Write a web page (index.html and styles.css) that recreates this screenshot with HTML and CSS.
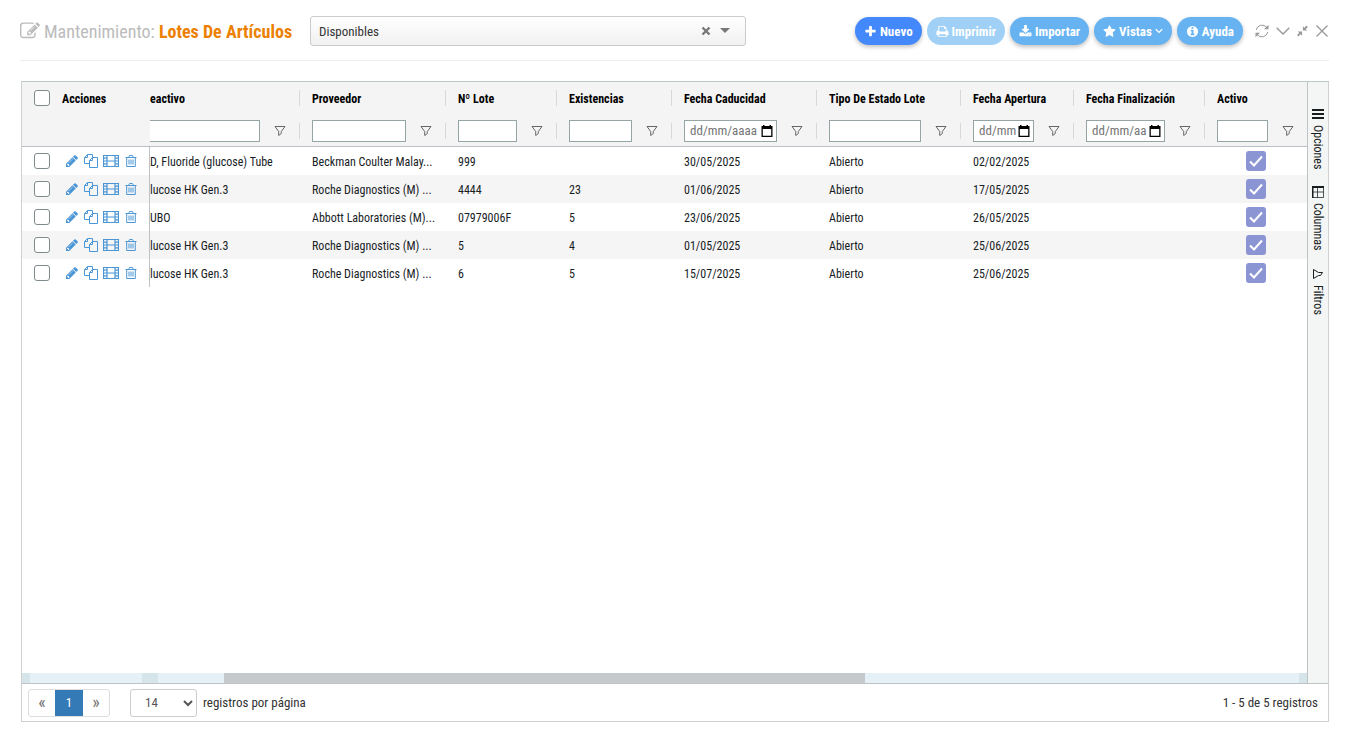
FILE: index.html
```html
<!DOCTYPE html>
<html lang="es">

<head>
  <meta charset="UTF-8" />
  <meta name="viewport" content="width=device-width, initial-scale=1.0" />
  <title>Mantenimiento: Lotes De Artículos</title>
  <link rel="stylesheet" href="styles.css">
</head>

<body>
  <!-- Iconos compartidos -->
  <svg class="sprite" aria-hidden="true">
    <symbol id="i-edit" viewBox="0 0 1792 1792"><path d="M888 1184l116-116-152-152-116 116v56h96v96h56zm440-720q-16-16-33 1l-350 350q-17 17-1 33t33-1l350-350q17-17 1-33zm80 594v190q0 119-84.5 203.5t-203.5 84.5h-832q-119 0-203.5-84.5t-84.5-203.5v-832q0-119 84.5-203.5t203.5-84.5h832q63 0 117 25 15 7 18 23 3 17-9 29l-49 49q-14 14-32 8-23-6-45-6h-832q-66 0-113 47t-47 113v832q0 66 47 113t113 47h832q66 0 113-47t47-113v-126q0-13 9-22l64-64q15-15 35-7t20 29zm-96-738l288 288-672 672h-288v-288zm444 132l-92 92-288-288 92-92q28-28 68-28t68 28l152 152q28 28 28 68t-28 68z"/></symbol>
    <symbol id="i-plus" viewBox="0 0 1792 1792"><path d="M1600 736v192q0 40-28 68t-68 28h-416v416q0 40-28 68t-68 28h-192q-40 0-68-28t-28-68v-416h-416q-40 0-68-28t-28-68v-192q0-40 28-68t68-28h416v-416q0-40 28-68t68-28h192q40 0 68 28t28 68v416h416q40 0 68 28t28 68z"/></symbol>
    <symbol id="i-print" viewBox="0 0 1792 1792"><path d="M448 1536h896v-256h-896v256zm0-640h896v-384h-160q-40 0-68-28t-28-68v-160h-640v640zm1152 64q0-26-19-45t-45-19-45 19-19 45 19 45 45 19 45-19 19-45zm128 0v416q0 13-9.500 22.500t-22.500 9.500h-224v160q0 40-28 68t-68 28h-960q-40 0-68-28t-28-68v-160h-224q-13 0-22.500-9.500t-9.500-22.500v-416q0-79 56.500-135.500t135.500-56.500h64v-544q0-40 28-68t68-28h672q40 0 88 20t76 48l152 152q28 28 48 76t20 88v256h64q79 0 135.500 56.500t56.500 135.500z"/></symbol>
    <symbol id="i-download" viewBox="0 0 1792 1792"><path d="M1344 1344q0-26-19-45t-45-19-45 19-19 45 19 45 45 19 45-19 19-45zm256 0q0-26-19-45t-45-19-45 19-19 45 19 45 45 19 45-19 19-45zm128-224v320q0 40-28 68t-68 28h-1472q-40 0-68-28t-28-68v-320q0-40 28-68t68-28h465l135 136q58 56 136 56t136-56l136-136h464q40 0 68 28t28 68zm-325-569q17 41-14 70l-448 448q-18 19-45 19t-45-19l-448-448q-31-29-14-70 17-39 59-39h256v-448q0-26 19-45t45-19h256q26 0 45 19t19 45v448h256q42 0 59 39z"/></symbol>
    <symbol id="i-star" viewBox="0 0 1792 1792"><path d="M1728 647q0 22-26 48l-363 354 86 500q1 7 1 20 0 21-10.500 35.500t-30.500 14.500q-19 0-40-12l-449-236-449 236q-22 12-40 12-21 0-31.500-14.500t-10.500-35.500q0-6 2-20l86-500-364-354q-25-27-25-48 0-37 56-46l502-73 225-455q19-41 49-41t49 41l225 455 502 73q56 9 56 46z"/></symbol>
    <symbol id="i-info" viewBox="0 0 1792 1792"><path d="M1152 1376v-160q0-14-9-23t-23-9h-96v-512q0-14-9-23t-23-9h-320q-14 0-23 9t-9 23v160q0 14 9 23t23 9h96v320h-96q-14 0-23 9t-9 23v160q0 14 9 23t23 9h448q14 0 23-9t9-23zm-128-896v-160q0-14-9-23t-23-9h-192q-14 0-23 9t-9 23v160q0 14 9 23t23 9h192q14 0 23-9t9-23zm640 416q0 209-103 385.500t-279.500 279.500-385.500 103-385.500-103-279.500-279.500-103-385.500 103-385.500 279.500-279.500 385.500-103 385.500 103 279.500 279.500 103 385.500z"/></symbol>
    <symbol id="i-pencil" viewBox="0 0 1792 1792"><path d="M491 1536l91-91-235-235-91 91v107h128v128h107zm523-928q0-22-22-22-10 0-17 7l-542 542q-7 7-7 17 0 22 22 22 10 0 17-7l542-542q7-7 7-17zm-54-192l416 416-832 832h-416v-416zm683 96q0 53-37 90l-166 166-416-416 166-165q36-38 90-38 53 0 91 38l235 234q37 39 37 91z"/></symbol>
    <symbol id="i-copy" viewBox="0 0 14 14"><path d="M5.500 9.500h-5v-6l3-3h5v3M3.500.5v3h-3M13.500 13.500h-8v-7l3-3h5zM8.500 3.500v3h-3" fill="none" stroke="currentColor"/></symbol>
    <symbol id="i-film" viewBox="0 0 16 14"><path d="M.5 1.500h15v11H.5zM4 1.500v11M12 1.500v11M4 7h8M.5 4.200H4M.5 7H4M.5 9.800H4M12 4.200h3.500M12 7h3.500M12 9.800h3.500" fill="none" stroke="currentColor" stroke-width="1.200"/></symbol>
    <symbol id="i-trash" viewBox="0 0 12 14"><path d="M.5 3.500h11M3.500 3.500l1-2h3l1 2M1.700 3.500v9h8.600v-9M4 5.500v5M6 5.500v5M8 5.500v5" fill="none" stroke="currentColor"/></symbol>
    <symbol id="i-filter" viewBox="0 0 12 12"><path d="M1 1.500h10L7.300 6.500v2L4.700 10.500v-4z" fill="none" stroke="currentColor"/></symbol>
    <symbol id="i-calendar" viewBox="0 0 12 12"><path d="M2 0h1.500v1h5V0H10v1h1.500v11H.5V1H2zM1.800 4v6.700h8.400V4z" fill-rule="evenodd"/></symbol>
    <symbol id="i-refresh" viewBox="0 0 14 14"><path d="M1.200 6a6 6 0 0 1 10.600-2.600M12.800 8A6 6 0 0 1 2.200 10.600" fill="none" stroke="currentColor"/><path d="M13.500.8v4.400H9zM.5 13.200V8.800H5z"/></symbol>
    <symbol id="i-down" viewBox="0 0 14 14"><path d="M.7 3.700L7 10l6.300-6.300" fill="none" stroke="currentColor" stroke-width="1.400"/></symbol>
    <symbol id="i-compress" viewBox="0 0 14 14"><path d="M7.500 6.500V1l1.900 1.900L12.200.1l1.700 1.700-2.800 2.800L13 6.500zM6.500 7.500V13l-1.900-1.900-2.800 2.800-1.700-1.700 2.800-2.800L1 7.500z"/></symbol>
    <symbol id="i-close" viewBox="0 0 14 14"><path d="M1.500 1.500l11 11M12.500 1.500l-11 11" fill="none" stroke="currentColor" stroke-width="1.300"/></symbol>
  </svg>

  <div class="page">
    <header class="header">
      <h1 class="title">
        <svg class="title-icon"><use href="#i-edit"/></svg>
        <span>Mantenimiento: <strong>Lotes De Artículos</strong></span>
      </h1>

      <div class="view-picker">
        <select class="view-select" aria-label="Vista">
          <option>Disponibles</option>
        </select>
        <button class="view-clear" type="button" aria-label="Quitar vista">
          <svg viewBox="0 0 10 10"><path d="M1.500 1.500l7 7M8.500 1.500l-7 7" stroke="currentColor" stroke-width="2.400"/></svg>
        </button>
        <svg class="view-caret" viewBox="0 0 10 5"><path d="M0 0h10L5 5z"/></svg>
      </div>

      <div class="toolbar">
        <button class="btn btn-primary" type="button"><svg><use href="#i-plus"/></svg>Nuevo</button>
        <button class="btn" type="button" disabled><svg><use href="#i-print"/></svg>Imprimir</button>
        <button class="btn" type="button"><svg><use href="#i-download"/></svg>Importar</button>
        <button class="btn" type="button"><svg><use href="#i-star"/></svg>Vistas<svg class="btn-caret" viewBox="0 0 8 6"><path d="M.8 1.200L4 4.400l3.200-3.200" fill="none" stroke="currentColor" stroke-width="1.300"/></svg></button>
        <button class="btn" type="button"><svg><use href="#i-info"/></svg>Ayuda</button>
      </div>

      <div class="window-tools">
        <button type="button" aria-label="Recargar"><svg><use href="#i-refresh"/></svg></button>
        <button type="button" aria-label="Plegar"><svg><use href="#i-down"/></svg></button>
        <button type="button" aria-label="Reducir"><svg class="small"><use href="#i-compress"/></svg></button>
        <button type="button" aria-label="Cerrar"><svg><use href="#i-close"/></svg></button>
      </div>
    </header>

    <main class="grid">
      <div class="grid-body">
        <div class="grid-view">
          <table class="grid-table">
            <colgroup>
              <col class="c-check"><col class="c-actions"><col class="c-reagent"><col class="c-supplier"><col class="c-lot">
              <col class="c-stock"><col class="c-expiry"><col class="c-state"><col class="c-opened"><col class="c-ended"><col class="c-active">
            </colgroup>
            <thead>
              <tr>
                <th><input type="checkbox" class="check" aria-label="Seleccionar todo"></th>
                <th><div class="head head-plain">Acciones</div></th>
                <th class="edge"><div class="head">eactivo</div></th>
                <th><div class="head">Proveedor</div></th>
                <th><div class="head">Nº Lote</div></th>
                <th><div class="head">Existencias</div></th>
                <th><div class="head">Fecha Caducidad</div></th>
                <th><div class="head">Tipo De Estado Lote</div></th>
                <th><div class="head">Fecha Apertura</div></th>
                <th><div class="head">Fecha Finalización</div></th>
                <th><div class="head">Activo</div></th>
              </tr>
              <tr class="filters">
                <td></td>
                <td></td>
                <td class="edge"><div class="filter"><input type="text" aria-label="Filtrar reactivo"><button type="button" aria-label="Filtro"><svg><use href="#i-filter"/></svg></button></div></td>
                <td><div class="filter"><input type="text" aria-label="Filtrar proveedor"><button type="button" aria-label="Filtro"><svg><use href="#i-filter"/></svg></button></div></td>
                <td><div class="filter"><input type="text" aria-label="Filtrar lote"><button type="button" aria-label="Filtro"><svg><use href="#i-filter"/></svg></button></div></td>
                <td><div class="filter"><input type="text" aria-label="Filtrar existencias"><button type="button" aria-label="Filtro"><svg><use href="#i-filter"/></svg></button></div></td>
                <td><div class="filter"><label class="date"><input type="text" placeholder="dd/mm/aaaa" aria-label="Filtrar caducidad"><svg><use href="#i-calendar"/></svg></label><button type="button" aria-label="Filtro"><svg><use href="#i-filter"/></svg></button></div></td>
                <td><div class="filter"><input type="text" aria-label="Filtrar estado"><button type="button" aria-label="Filtro"><svg><use href="#i-filter"/></svg></button></div></td>
                <td><div class="filter"><label class="date"><input type="text" placeholder="dd/mm/aaaa" aria-label="Filtrar apertura"><svg><use href="#i-calendar"/></svg></label><button type="button" aria-label="Filtro"><svg><use href="#i-filter"/></svg></button></div></td>
                <td><div class="filter"><label class="date"><input type="text" placeholder="dd/mm/aaaa" aria-label="Filtrar finalización"><svg><use href="#i-calendar"/></svg></label><button type="button" aria-label="Filtro"><svg><use href="#i-filter"/></svg></button></div></td>
                <td><div class="filter"><input type="text" aria-label="Filtrar activo"><button type="button" aria-label="Filtro"><svg><use href="#i-filter"/></svg></button></div></td>
              </tr>
            </thead>
            <tbody>
              <tr>
                <td class="pick"><input type="checkbox" class="check" aria-label="Seleccionar lote 999"></td>
                <td class="pinned"><div class="actions"><button type="button" aria-label="Editar"><svg><use href="#i-pencil"/></svg></button><button type="button" aria-label="Copiar"><svg><use href="#i-copy"/></svg></button><button type="button" aria-label="Detalle"><svg class="wide"><use href="#i-film"/></svg></button><button type="button" aria-label="Borrar"><svg><use href="#i-trash"/></svg></button></div></td>
                <td class="edge">D, Fluoride (glucose) Tube</td>
                <td>Beckman Coulter Malay...</td>
                <td>999</td>
                <td></td>
                <td>30/05/2025</td>
                <td>Abierto</td>
                <td>02/02/2025</td>
                <td></td>
                <td class="active"><input type="checkbox" class="flag" checked aria-label="Activo"></td>
              </tr>
              <tr>
                <td class="pick"><input type="checkbox" class="check" aria-label="Seleccionar lote 4444"></td>
                <td class="pinned"><div class="actions"><button type="button" aria-label="Editar"><svg><use href="#i-pencil"/></svg></button><button type="button" aria-label="Copiar"><svg><use href="#i-copy"/></svg></button><button type="button" aria-label="Detalle"><svg class="wide"><use href="#i-film"/></svg></button><button type="button" aria-label="Borrar"><svg><use href="#i-trash"/></svg></button></div></td>
                <td class="edge">lucose HK Gen.3</td>
                <td>Roche Diagnostics (M) ...</td>
                <td>4444</td>
                <td>23</td>
                <td>01/06/2025</td>
                <td>Abierto</td>
                <td>17/05/2025</td>
                <td></td>
                <td class="active"><input type="checkbox" class="flag" checked aria-label="Activo"></td>
              </tr>
              <tr>
                <td class="pick"><input type="checkbox" class="check" aria-label="Seleccionar lote 07979006F"></td>
                <td class="pinned"><div class="actions"><button type="button" aria-label="Editar"><svg><use href="#i-pencil"/></svg></button><button type="button" aria-label="Copiar"><svg><use href="#i-copy"/></svg></button><button type="button" aria-label="Detalle"><svg class="wide"><use href="#i-film"/></svg></button><button type="button" aria-label="Borrar"><svg><use href="#i-trash"/></svg></button></div></td>
                <td class="edge">UBO</td>
                <td>Abbott Laboratories (M)...</td>
                <td>07979006F</td>
                <td>5</td>
                <td>23/06/2025</td>
                <td>Abierto</td>
                <td>26/05/2025</td>
                <td></td>
                <td class="active"><input type="checkbox" class="flag" checked aria-label="Activo"></td>
              </tr>
              <tr>
                <td class="pick"><input type="checkbox" class="check" aria-label="Seleccionar lote 5"></td>
                <td class="pinned"><div class="actions"><button type="button" aria-label="Editar"><svg><use href="#i-pencil"/></svg></button><button type="button" aria-label="Copiar"><svg><use href="#i-copy"/></svg></button><button type="button" aria-label="Detalle"><svg class="wide"><use href="#i-film"/></svg></button><button type="button" aria-label="Borrar"><svg><use href="#i-trash"/></svg></button></div></td>
                <td class="edge">lucose HK Gen.3</td>
                <td>Roche Diagnostics (M) ...</td>
                <td>5</td>
                <td>4</td>
                <td>01/05/2025</td>
                <td>Abierto</td>
                <td>25/06/2025</td>
                <td></td>
                <td class="active"><input type="checkbox" class="flag" checked aria-label="Activo"></td>
              </tr>
              <tr>
                <td class="pick"><input type="checkbox" class="check" aria-label="Seleccionar lote 6"></td>
                <td class="pinned"><div class="actions"><button type="button" aria-label="Editar"><svg><use href="#i-pencil"/></svg></button><button type="button" aria-label="Copiar"><svg><use href="#i-copy"/></svg></button><button type="button" aria-label="Detalle"><svg class="wide"><use href="#i-film"/></svg></button><button type="button" aria-label="Borrar"><svg><use href="#i-trash"/></svg></button></div></td>
                <td class="edge">lucose HK Gen.3</td>
                <td>Roche Diagnostics (M) ...</td>
                <td>6</td>
                <td>5</td>
                <td>15/07/2025</td>
                <td>Abierto</td>
                <td>25/06/2025</td>
                <td></td>
                <td class="active"><input type="checkbox" class="flag" checked aria-label="Activo"></td>
              </tr>
            </tbody>
          </table>

          <div class="scrollbar">
            <span class="scroll-cap"></span>
            <span class="scroll-gap"></span>
            <span class="scroll-cap scroll-cap-mid"></span>
            <div class="scroll-track"><div class="scroll-thumb"></div></div>
            <span class="scroll-cap"></span>
          </div>
        </div>

        <aside class="side">
          <button type="button"><svg viewBox="0 0 12 12"><path d="M0 1h12v2H0zM0 5h12v2H0zM0 9h12v2H0z"/></svg>Opciones</button>
          <button type="button"><svg viewBox="0 0 12 12"><path d="M.5 1v10.500h11V1M5.500 1v10.500M1 6h10.500" fill="none" stroke="currentColor" stroke-opacity=".75"/><path d="M0 0h12v2H0zM0 0h1.500v12H0z"/></svg>Columnas</button>
          <button type="button"><svg viewBox="0 0 12 12"><path d="M1.500 1.500v9l5-3h2l2-3h-4z" fill="none" stroke="currentColor"/></svg>Filtros</button>
        </aside>
      </div>

      <footer class="footer">
        <nav class="pager" aria-label="Paginación">
          <a href="#" class="arrow" aria-label="Anterior">«</a>
          <a href="#" class="current">1</a>
          <a href="#" class="arrow" aria-label="Siguiente">»</a>
        </nav>
        <select class="page-size" id="pageSize">
          <option>14</option>
        </select>
        <label for="pageSize">registros por página</label>
        <span class="summary">1 - 5 de 5 registros</span>
      </footer>
    </main>
  </div>
</body>

</html>
```
FILE: styles.css
```css
* {
  box-sizing: border-box;
}

body {
  margin: 0;
  background: #fff;
  color: #181d1f;
  font-family: "Roboto Condensed", "Liberation Sans Narrow", Roboto, sans-serif;
  font-size: 12px;
}

button,
input,
select {
  font-family: inherit;
}

button {
  margin: 0;
  padding: 0;
  border: none;
  background: none;
  color: inherit;
  cursor: pointer;
}

svg {
  display: block;
  flex: none;
  fill: currentColor;
}

.sprite {
  display: none;
}

.page {
  display: flex;
  flex-direction: column;
  min-height: 100vh;
  padding: 0 19px 20px 20px;
}

/* Cabecera */
.header {
  display: flex;
  align-items: center;
  height: 61px;
  margin-bottom: 20px;
  padding-top: 2px;
  border-bottom: 1px solid #eee;
}

.title {
  display: flex;
  align-items: center;
  gap: 4px;
  width: 290px;
  margin: 0;
  color: #bbb;
  font-size: 18px;
  font-weight: 400;
  white-space: nowrap;
}

.title strong {
  color: #ec8000;
  font-weight: 700;
}

.title-icon {
  width: 20px;
  height: 20px;
}

.view-picker {
  position: relative;
  width: 33.33%;
}

.view-select {
  width: 100%;
  height: 30px;
  padding: 0 60px 0 8px;
  border: 1px solid #ccc;
  border-radius: 3px;
  background: linear-gradient(#fff, #f1f1f1);
  color: #333;
  font-size: 13px;
  appearance: none;
}

.view-clear {
  position: absolute;
  top: 10px;
  right: 35px;
  color: #777;
}

.view-clear svg {
  width: 10px;
  height: 10px;
}

.view-caret {
  position: absolute;
  top: 12px;
  right: 16px;
  width: 10px;
  height: 5px;
  color: #777;
}

.toolbar {
  display: flex;
  gap: 5px;
  margin-left: auto;
}

.btn {
  display: flex;
  align-items: center;
  gap: 3px;
  height: 28px;
  padding: 0 9px;
  border-radius: 14px;
  background: #67b3f1;
  box-shadow: 0 2px 4px rgba(0, 0, 0, 0.25);
  color: #fff;
  font-size: 13px;
  font-weight: 700;
}

.btn svg {
  width: 13px;
  height: 13px;
}

.btn .btn-caret {
  width: 8px;
  height: 6px;
}

.btn-primary {
  background: #4489fb;
}

.btn:disabled {
  background: #a0d0f6;
  box-shadow: none;
}

.window-tools {
  display: flex;
  align-items: center;
  gap: 7px;
  margin-left: 12px;
  color: #999;
}

.window-tools svg {
  width: 14px;
  height: 14px;
}

.window-tools .small {
  width: 11px;
}

/* Tabla */
.grid {
  display: flex;
  flex: 1;
  flex-direction: column;
  margin-left: 1px;
  border: 1px solid #cdd1d1;
  border-top-color: #bdc9c7;
}

.grid-body {
  display: flex;
  flex: 1;
  border-bottom: 1px solid #bdc3c7;
}

.grid-view {
  display: flex;
  flex: 1;
  flex-direction: column;
  min-width: 0;
}

.grid-table {
  width: 100%;
  border-collapse: separate;
  border-spacing: 0;
  table-layout: fixed;
}

.c-check { width: 40px; }
.c-actions { width: 88px; }
.c-reagent { width: 150px; }
.c-supplier { width: 146px; }
.c-lot { width: 111px; }
.c-stock { width: 115px; }
.c-expiry { width: 145px; }
.c-state { width: 144px; }
.c-opened { width: 113px; }
.c-ended { width: 131px; }
.c-active { width: 102px; }

.grid-table th,
.grid-table td {
  height: 28px;
  padding: 2px 0 0 12px;
  overflow: hidden;
  text-align: left;
  white-space: nowrap;
}

.grid-table thead {
  background: #f4f4f4;
  color: #000;
}

.grid-table th {
  height: 32px;
  padding: 0;
  font-weight: 700;
}

.grid-table th:first-child {
  padding-left: 12px;
}

.grid-table thead td {
  height: 33px;
  padding: 1px 0 0;
  border-bottom: 1px solid #babfc7;
}

.head,
.filter {
  height: 16px;
  padding-left: 12px;
  border-right: 1px solid #d5d9dc;
  line-height: 18px;
}

.head-plain {
  padding-left: 0;
  border-right: none;
}

.edge .head,
.edge .filter {
  padding-left: 0;
}

th:last-child .head,
td:last-child .filter {
  border-right: none;
}

.filter {
  display: flex;
  align-items: center;
}

.filter input {
  flex: 1;
  width: 100%;
  min-width: 0;
  height: 22px;
  padding: 0 4px;
  border: 1px solid #95a5a6;
  border-radius: 0;
  background: #fff;
  font-size: 12px;
}

.edge .filter input {
  border-left: none;
}

.filter .date {
  display: flex;
  flex: 1;
  align-items: center;
  gap: 2px;
  min-width: 0;
  height: 22px;
  padding: 0 3px 0 5px;
  border: 1px solid #95a5a6;
  background: #fff;
}

.filter .date input {
  height: 20px;
  padding: 0;
  border: none;
  font-size: 13px;
}

.date input::placeholder {
  color: #757575;
}

.date svg,
.filter button svg {
  width: 12px;
  height: 12px;
}

.filter button {
  width: 12px;
  margin: 0 13px 0 14px;
  color: #666;
}

tbody tr:nth-child(even) {
  background: #f6f5f6;
}

.grid-table tbody .pick {
  padding-top: 0;
}

.grid-table tbody .pinned {
  padding: 0 0 0 3px;
  border-right: 1px solid #bdc3c7;
}

.grid-table tbody .edge {
  padding-left: 0;
}

.grid-table tbody .active {
  padding: 0;
}

.check {
  display: block;
  width: 16px;
  height: 16px;
  margin: 0;
  border: 1px solid #7f8c8d;
  border-radius: 3px;
  background: #fff;
  appearance: none;
}

.flag {
  display: block;
  width: 20px;
  height: 20px;
  margin: 0 auto;
  border-radius: 3px;
  background: #8c95d4 url("data:image/svg+xml,%3Csvg xmlns='http://www.w3.org/2000/svg' viewBox='0 0 20 20'%3E%3Cpath d='M4 10.500l4 4 8-9' fill='none' stroke='white' stroke-width='2'/%3E%3C/svg%3E");
  appearance: none;
}

.actions {
  display: flex;
  gap: 5px;
  color: #4b96d6;
}

.actions svg {
  width: 14px;
  height: 14px;
}

.actions .wide {
  width: 16px;
}

/* Barra de desplazamiento horizontal */
.scrollbar {
  display: flex;
  height: 10px;
  margin-top: auto;
}

.scroll-cap {
  width: 8px;
  background: #d5e5ea;
}

.scroll-gap {
  width: 112px;
  background: #e5f0f7;
}

.scroll-cap-mid {
  width: 16px;
}

.scroll-track {
  flex: 1;
  padding-left: 66px;
  background: #e5f0f7;
}

.scroll-thumb {
  width: 59.6%;
  height: 10px;
  background: #c6c9cc;
}

/* Panel lateral */
.side {
  display: flex;
  flex-direction: column;
  gap: 17px;
  width: 21px;
  padding-top: 26px;
  border-left: 1px solid #bdc3c7;
  background: #f4f5f5;
}

.side button {
  display: flex;
  align-items: center;
  gap: 5px;
  width: 20px;
  font-size: 12px;
  writing-mode: vertical-rl;
}

.side svg {
  width: 12px;
  height: 12px;
}

/* Paginación */
.footer {
  display: flex;
  align-items: center;
  height: 37px;
  padding: 0 10px 0 6px;
  color: #333;
  font-size: 13px;
}

.pager {
  display: flex;
  height: 28px;
  overflow: hidden;
  border: 1px solid #ddd;
  border-radius: 3px;
}

.pager a {
  width: 28px;
  color: #777;
  line-height: 26px;
  text-align: center;
  text-decoration: none;
}

.pager .arrow {
  width: 26px;
  font-size: 18px;
  line-height: 24px;
}

.pager .current {
  background: #337ab7;
  color: #fff;
}

.page-size {
  width: 67px;
  height: 28px;
  margin: 0 6px 0 20px;
  padding: 0 0 0 10px;
  border: 1px solid #ccc;
  border-radius: 3px;
  background: #fff;
  color: #555;
  font-size: 13px;
}

.summary {
  margin-left: auto;
}
```
